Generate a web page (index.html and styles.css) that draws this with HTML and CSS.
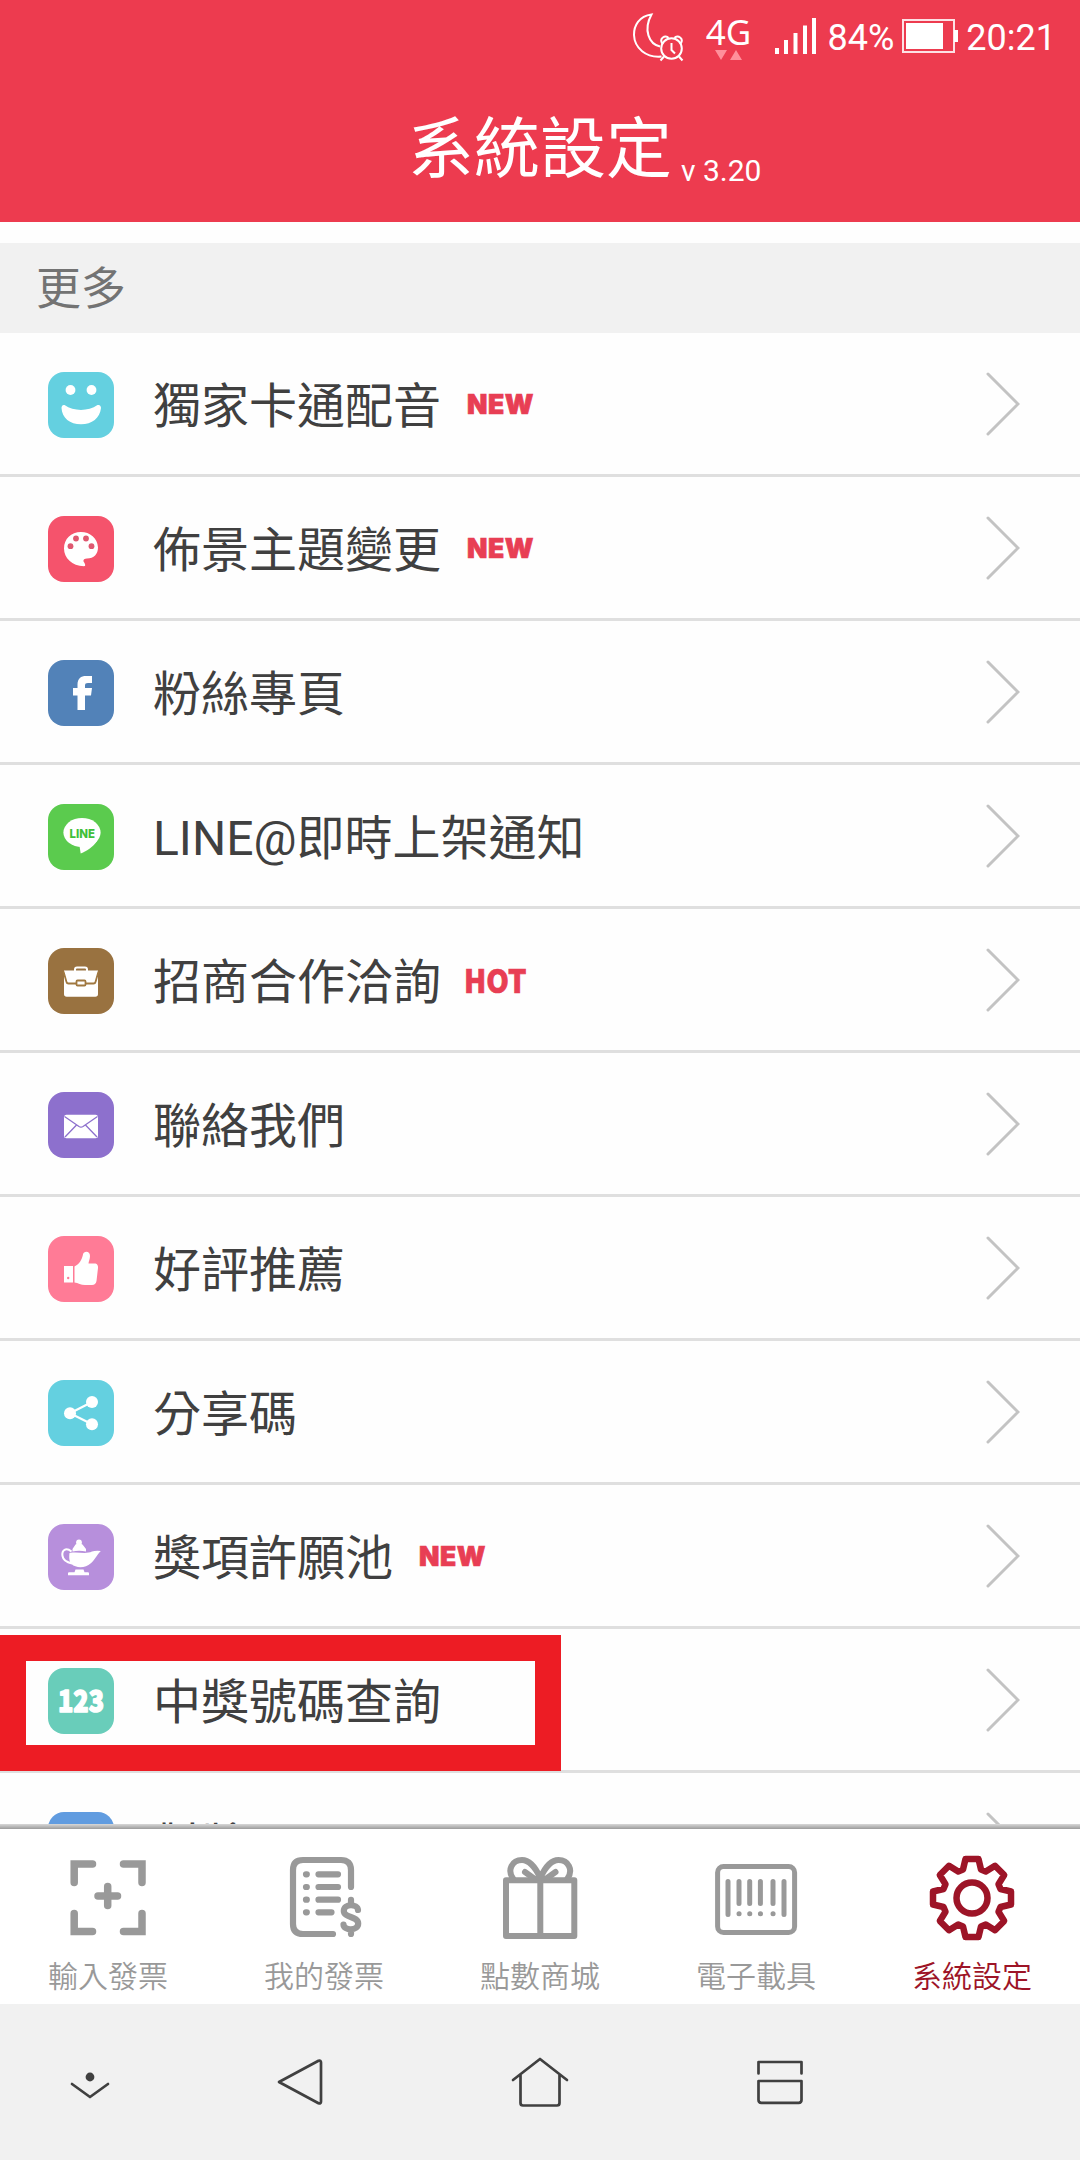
FILE: index.html
```
<!DOCTYPE html>
<html lang="zh-Hant">
<head>
  <meta charset="UTF-8">
  <meta name="viewport" content="width=device-width, initial-scale=1.0">
  <title>系統設定</title>
  <link rel="stylesheet" href="styles.css">
</head>
<body>
  <header class="header">
    <div class="status-bar">
      <svg class="status-moon" width="56" height="50" viewBox="0 0 56 50" fill="none" stroke="#fff" stroke-width="2">
        <path d="M31 36.500C20 34 14 20 22.500 4.500C10 6 4.800 16 5 25C5.500 38 17 48 32.500 46.500"/>
        <circle cx="42.500" cy="38.500" r="10.300"/>
        <path d="M42.500 33v7l3.500 3.500M35 46.500l-3.500 4M50 46.500l3.500 4"/>
        <path d="M33.500 34c-4-6 3-9.500 6-6M51.500 34c4-6-3-9.500-6-6"/>
      </svg>
      <div class="network">
        <span class="network-type">4G</span>
        <svg width="28" height="10" viewBox="0 0 28 10" fill="#ff8f9b">
          <path d="M0 0h12l-6 10zM15 10h12l-6-10z"/>
        </svg>
      </div>
      <svg class="signal" width="42" height="36" viewBox="0 0 42 36" fill="#fff">
        <path d="M0 30h4v6h-4zM9 22h4v14h-4zM18.500 15h4v21h-4zM28 7.500h4v28.500h-4zM37 0h4v36h-4z"/>
      </svg>
      <span class="battery-level">84%</span>
      <svg class="battery" width="56" height="34" viewBox="0 0 56 34">
        <rect x="1" y="1" width="51" height="32" fill="none" stroke="#fff" stroke-opacity=".85" stroke-width="2"/>
        <path d="M4 4h37v26h-37zM52 11h4v12h-4z" fill="#fff"/>
      </svg>
      <span class="clock">20:21</span>
    </div>
    <div class="title-bar">
      <h1>系統設定</h1>
      <span class="version">v 3.20</span>
    </div>
  </header>

  <main class="content">
    <h2 class="section-title">更多</h2>
    <ul class="menu">
      <li class="menu-item">
        <svg class="menu-icon cyan" viewBox="0 0 66 66" fill="#fff">
          <circle cx="22.500" cy="18" r="4.900"/>
          <circle cx="43.500" cy="18" r="4.900"/>
          <path d="M16.500 33C26 39.500 40 39.500 49.500 33C52 32.500 53 34 53 36C52 46 44 52.300 33 52.300S14 46 13.500 36C13.500 34 14.500 32.500 16.500 33z"/>
        </svg>
        <span class="menu-text">獨家卡通配音</span>
        <span class="tag">NEW</span>
        <svg class="arrow" viewBox="0 0 34 64"><path d="M2 2l30 30-30 30"/></svg>
      </li>
      <li class="menu-item">
        <svg class="menu-icon red" viewBox="0 0 66 66" fill="#fff">
          <path d="M33 16C23 16 16 23 16 32.500C16 42 24 50 36 50.300C38.500 50 36.500 47 35.500 45.500C35 43.500 36.500 42.500 39 42.500C46 42.500 50 38 50 31.500C49.500 22 42 16 33 16z"/>
          <g fill="#df5870">
            <circle cx="28" cy="22.500" r="2.900"/>
            <circle cx="38" cy="22.500" r="2.900"/>
            <circle cx="22.500" cy="30.200" r="2.900"/>
            <circle cx="43.500" cy="30.200" r="2.900"/>
          </g>
        </svg>
        <span class="menu-text">佈景主題變更</span>
        <span class="tag">NEW</span>
        <svg class="arrow" viewBox="0 0 34 64"><path d="M2 2l30 30-30 30"/></svg>
      </li>
      <li class="menu-item">
        <svg class="menu-icon blue" viewBox="0 0 66 66" fill="#fff">
          <path d="M29.500 50V35.500H25V28h4.500V24.500C29.500 18.500 33 16 38 16h6v7h-4c-2.200 0-3 .8-3 2.500V28h7l-1 7.500h-6V50z"/>
        </svg>
        <span class="menu-text">粉絲專頁</span>
        <svg class="arrow" viewBox="0 0 34 64"><path d="M2 2l30 30-30 30"/></svg>
      </li>
      <li class="menu-item">
        <svg class="menu-icon green" viewBox="0 0 66 66">
          <ellipse cx="34" cy="28.500" rx="18.600" ry="14.500" fill="#fff"/>
          <path d="M31.500 42l1.200 7.500C39 47 45 43 49.500 36.500z" fill="#fff"/>
          <text class="line-text" x="21.500" y="33.500" textLength="25.500" lengthAdjust="spacingAndGlyphs">LINE</text>
        </svg>
        <span class="menu-text">LINE@即時上架通知</span>
        <svg class="arrow" viewBox="0 0 34 64"><path d="M2 2l30 30-30 30"/></svg>
      </li>
      <li class="menu-item">
        <svg class="menu-icon brown" viewBox="0 0 66 66" fill="none">
          <path d="M27 23v-1.500q0-2 2-2h8q2 0 2 2V23" stroke="#fff" stroke-width="2"/>
          <path d="M16 22.500h34V46q0 2.700-2.700 2.700H18.700Q16 48.700 16 46z" fill="#fff"/>
          <path d="M15.500 23.500l3 10.500q.3 1.500 2 1.500h25q1.700 0 2-1.500l3-10.500" stroke="#a07840" stroke-width="1.800"/>
          <rect x="28.500" y="32.500" width="9" height="5" rx="1" fill="#fff" stroke="#a07840" stroke-width="1.800"/>
        </svg>
        <span class="menu-text">招商合作洽詢</span>
        <span class="tag hot">HOT</span>
        <svg class="arrow" viewBox="0 0 34 64"><path d="M2 2l30 30-30 30"/></svg>
      </li>
      <li class="menu-item">
        <svg class="menu-icon purple" viewBox="0 0 66 66">
          <rect x="16" y="22.700" width="34" height="23.500" rx="2.500" fill="#fff"/>
          <path d="M16.500 24.500L31 34.500q2 1.200 4 0L49.500 24.500M17 45L28.500 33M49 45L37.500 33" fill="none" stroke="#8d70cd" stroke-width="1.300"/>
        </svg>
        <span class="menu-text">聯絡我們</span>
        <svg class="arrow" viewBox="0 0 34 64"><path d="M2 2l30 30-30 30"/></svg>
      </li>
      <li class="menu-item">
        <svg class="menu-icon pink" viewBox="0 0 66 66" fill="#fff">
          <path d="M16 30h9v16.500h-9z"/>
          <circle cx="20.200" cy="42" r="1.200" fill="#ff7b96"/>
          <path d="M26.500 30.500C31 28.500 34 23.500 35 18.500C35.500 15 42 14.500 42 20C42 23 40.500 25.500 40.500 27.500H47.500C49.500 28 50.200 30 50 32L48.500 45C48 47.500 46.500 49 44 49H37C33 49 30 47 26.500 46.500z"/>
        </svg>
        <span class="menu-text">好評推薦</span>
        <svg class="arrow" viewBox="0 0 34 64"><path d="M2 2l30 30-30 30"/></svg>
      </li>
      <li class="menu-item">
        <svg class="menu-icon cyan" viewBox="0 0 66 66" fill="#fff">
          <path d="M44 22L22 33.300l22 11" fill="none" stroke="#fff" stroke-width="2.200"/>
          <circle cx="22" cy="33.300" r="6"/>
          <circle cx="44" cy="22" r="6"/>
          <circle cx="44" cy="44.300" r="6"/>
        </svg>
        <span class="menu-text">分享碼</span>
        <svg class="arrow" viewBox="0 0 34 64"><path d="M2 2l30 30-30 30"/></svg>
      </li>
      <li class="menu-item">
        <svg class="menu-icon lilac" viewBox="0 0 66 66" fill="#fff">
          <circle cx="31" cy="18.500" r="2.900"/>
          <path d="M27.500 20.500q3.500-2 7 0l3.500 4.500v2.500q-7-1.500-13.500 0V25z"/>
          <path d="M21.500 29C30 27.500 38 30.500 44 27.500Q47.500 26.500 52.800 27C48 32 47 36 42.500 39.500C38 44 28 44.500 23.500 40C21 37.500 21 33 21.500 29z"/>
          <path d="M23.500 27.500C18 23 13.500 26 14.500 32C15.200 36.500 19.500 38.500 24 39.500" fill="none" stroke="#fff" stroke-width="2"/>
          <path d="M27.500 45.500h8l1 2.700h3.500q1 0 1 1.200v1.800H20v-1.800q0-1.200 1-1.200h5.500z"/>
        </svg>
        <span class="menu-text">獎項許願池</span>
        <span class="tag">NEW</span>
        <svg class="arrow" viewBox="0 0 34 64"><path d="M2 2l30 30-30 30"/></svg>
      </li>
      <li class="menu-item highlighted">
        <svg class="menu-icon teal" viewBox="0 0 66 66">
          <text class="num-text" x="10" y="43.500" textLength="46" lengthAdjust="spacingAndGlyphs">123</text>
        </svg>
        <span class="menu-text">中獎號碼查詢</span>
        <svg class="arrow" viewBox="0 0 34 64"><path d="M2 2l30 30-30 30"/></svg>
      </li>
      <li class="menu-item">
        <svg class="menu-icon sky" viewBox="0 0 66 66"></svg>
        <span class="menu-text">對獎</span>
        <svg class="arrow" viewBox="0 0 34 64"><path d="M2 2l30 30-30 30"/></svg>
      </li>
    </ul>
  </main>

  <nav class="tab-bar">
    <a class="tab">
      <svg class="tab-icon" viewBox="0 0 86 86" stroke-width="7.500">
        <path d="M27.500 9H9.200v18.500M58.500 9H77v18.500M9.200 58.500v18H27.500M77 58.500v18H58.500" stroke-linejoin="miter"/>
        <path d="M42.700 31.500v19M33 41h19.500"/>
      </svg>
      <span>輸入發票</span>
    </a>
    <a class="tab">
      <svg class="tab-icon" viewBox="0 0 86 86" stroke-width="6.200">
        <path d="M70 32V15Q70 5 60 5H22Q12 5 12 15V69Q12 79 22 79H52"/>
        <path d="M25 19.300h.8M37.500 19.300h19.500M25 32h.8M37.500 32h19.500M25 44.700h.8M37.500 44.700h19.500M25 57.300h.8M37.500 57.300h13"/>
        <path d="M77 55C76.500 48.500 62.800 48.500 62.800 56C62.800 63 77.200 61 77.200 68.500C77.200 76 62.800 76 62.500 69.500M70 44.800v4M70 75v4"/>
      </svg>
      <span>我的發票</span>
    </a>
    <a class="tab">
      <svg class="tab-icon" viewBox="0 0 86 86" stroke-width="6">
        <path d="M9 25.300h68.300V81H9zM43.300 25v56"/>
        <path d="M43.300 23C38 11 31 5 25 5C15 5 10 15 16 23.500M43.300 23C48.500 11 55.500 5 61.500 5C71.500 5 76.500 15 70.500 23.500M28 17l9 6.500M58.500 17l-9 6.500"/>
      </svg>
      <span>點數商城</span>
    </a>
    <a class="tab">
      <svg class="tab-icon" viewBox="0 0 86 86" stroke-width="5">
        <rect x="4.600" y="11.600" width="77" height="66" rx="6"/>
        <path d="M15 26.500v33M26 26.500v22M36.700 26.500v22M47.400 26.500v22M60 26.500v22M71 26.500v33"/>
        <path d="M26 58.700h.1M36.700 58.700h.1M47.400 58.700h.1M60 58.700h.1"/>
      </svg>
      <span>電子載具</span>
    </a>
    <a class="tab active">
      <svg class="tab-icon" viewBox="-43 -43 86 86" stroke-width="6.500">
        <path d="M-6.500-39L6.500-39L9-28.500L13.800-26.500L23-32.200L32.200-23L26.500-13.800L28.500-9L39-6.500L39 6.500L28.500 9L26.500 13.800L32.200 23L23 32.200L13.800 26.500L9 28.500L6.500 39L-6.500 39L-9 28.500L-13.800 26.500L-23 32.200L-32.200 23L-26.500 13.800L-28.500 9L-39 6.500L-39-6.500L-28.500-9L-26.500-13.800L-32.200-23L-23-32.200L-13.800-26.500L-9-28.500z"/>
        <circle r="15.500"/>
      </svg>
      <span>系統設定</span>
    </a>
  </nav>

  <div class="system-nav">
    <svg viewBox="0 0 60 60">
      <circle cx="30" cy="25" r="4.400" fill="#404040" stroke="none"/>
      <path d="M12 32l18 13 18-13"/>
    </svg>
    <svg viewBox="0 0 60 60">
      <path d="M9 30L48.500 8.700Q51 8 51 10.500V49.500Q51 52 48.500 51.300z"/>
    </svg>
    <svg viewBox="0 0 60 60">
      <path d="M3 28L30 7l27 21M10.500 23v28q0 2.500 2.500 2.500h34q2.500 0 2.500-2.500V23"/>
    </svg>
    <svg viewBox="0 0 60 60">
      <path d="M8.500 21.500V10H51.500V21.500M8.500 29H51.500V48q0 2.800-2.800 2.800H11.300q-2.800 0-2.800-2.800z"/>
    </svg>
  </div>
</body>
</html>
```
FILE: styles.css
```
* {
  margin: 0;
  padding: 0;
  box-sizing: border-box;
}

body {
  width: 1080px;
  height: 2160px;
  display: flex;
  flex-direction: column;
  overflow: hidden;
  font-family: Roboto, 'Noto Sans CJK TC', sans-serif;
  background-color: #fefefe;
  color: #404040;
}

svg {
  display: block;
  flex-shrink: 0;
}

/* Header */
.header {
  height: 222px;
  background-color: #ed3b4f;
  color: #fff;
}

.status-bar {
  display: flex;
  align-items: flex-start;
  justify-content: flex-end;
  height: 86px;
  padding-right: 24px;
  font-size: 36px;
  line-height: 42px;
}

.status-moon {
  margin-top: 10px;
  margin-right: 21px;
  overflow: visible;
}

.network {
  display: flex;
  flex-direction: column;
  align-items: center;
  width: 46px;
  margin-top: 13px;
  margin-right: 23px;
}

.network-type {
  font-family: 'Noto Sans', sans-serif;
  font-size: 35px;
  line-height: 37px;
}

.signal {
  margin-top: 18px;
  margin-right: 11px;
}

.battery-level,
.clock {
  margin-top: 17px;
}

.battery {
  margin-top: 19px;
  margin-left: 8px;
  margin-right: 8px;
}

.title-bar {
  display: flex;
  align-items: baseline;
  padding-left: 408px;
}

h1 {
  font-size: 66px;
  font-weight: 400;
  line-height: 128px;
}

.version {
  position: relative;
  top: 9px;
  margin-left: 9px;
  font-size: 30px;
}

/* Settings list */
.content {
  flex: 1;
  padding-top: 21px;
  overflow: hidden;
}

.section-title {
  height: 90px;
  padding-left: 36px;
  background-color: #f1f1f1;
  color: #737373;
  font-size: 45px;
  font-weight: 400;
  line-height: 94px;
}

.menu {
  list-style: none;
}

.menu-item {
  position: relative;
  display: flex;
  align-items: center;
  height: 144px;
  padding: 3px 60px 0 48px;
  border-bottom: 3px solid #dfdfdf;
}

.menu-icon {
  width: 66px;
  height: 66px;
  margin-right: 39px;
  border-radius: 16px;
}

.cyan { background-color: #64d0e0; }
.red { background-color: #f5536c; }
.blue { background-color: #5282b8; }
.green { background-color: #5bcb4e; }
.brown { background-color: #997240; }
.purple { background-color: #8d70cd; }
.pink { background-color: #ff7b96; }
.lilac { background-color: #b78fdc; }
.teal { background-color: #69cdba; }
.sky { background-color: #619ce0; }

.line-text {
  font-family: Inter, sans-serif;
  font-size: 12px;
  font-weight: 800;
  fill: #3fbf3a;
}

.num-text {
  font-family: 'Noto Sans CJK TC', sans-serif;
  font-size: 30px;
  font-weight: 900;
  fill: #fff;
  stroke: #fff;
  stroke-width: 1.5;
  stroke-linejoin: round;
}

.menu-text {
  padding-top: 4px;
  font-size: 48px;
  line-height: 72px;
}

.tag {
  margin-left: 26px;
  margin-top: -2px;
  color: #e83e54;
  font-family: Inter, sans-serif;
  font-size: 26.5px;
  font-weight: 900;
  letter-spacing: 0.6px;
  -webkit-text-stroke: 0.7px #e83e54;
}

.tag.hot {
  margin-left: 23px;
  margin-top: -5px;
  font-family: 'Noto Sans CJK TC', sans-serif;
  font-size: 32px;
  letter-spacing: 0;
  transform: scaleX(0.9);
  transform-origin: left;
}

.arrow {
  width: 34px;
  height: 64px;
  margin-left: auto;
  margin-top: -3px;
  fill: none;
  stroke: #c3c3c3;
  stroke-width: 3;
  stroke-linecap: round;
}

/* Red frame round the highlighted item */
.highlighted::after {
  content: '';
  position: absolute;
  top: 6px;
  left: 0;
  width: 561px;
  height: 136px;
  box-sizing: border-box;
  border: 26px solid #ed1c24;
}

/* Tab bar */
.tab-bar {
  display: flex;
  height: 180px;
  padding-top: 31px;
  background: linear-gradient(#d8d8d8, #9c9c9c) top / 100% 5px no-repeat #fff;
}

.tab {
  flex: 1;
  display: flex;
  flex-direction: column;
  align-items: center;
  color: #999;
  font-size: 30px;
  font-weight: 350;
}

.tab span {
  margin-top: 14px;
  line-height: 44px;
}

.tab-icon {
  width: 86px;
  height: 86px;
  fill: none;
  stroke: currentColor;
  stroke-linecap: round;
  stroke-linejoin: round;
}

.tab.active {
  color: #9d1427;
}

/* Android navigation buttons */
.system-nav {
  display: grid;
  grid-template-columns: 180px 240px 240px 240px;
  justify-items: center;
  align-items: center;
  height: 156px;
  background-color: #f1f1f1;
}

.system-nav svg {
  width: 60px;
  height: 60px;
  fill: none;
  stroke: #404040;
  stroke-width: 2.7;
  stroke-linecap: round;
  stroke-linejoin: round;
}
```
